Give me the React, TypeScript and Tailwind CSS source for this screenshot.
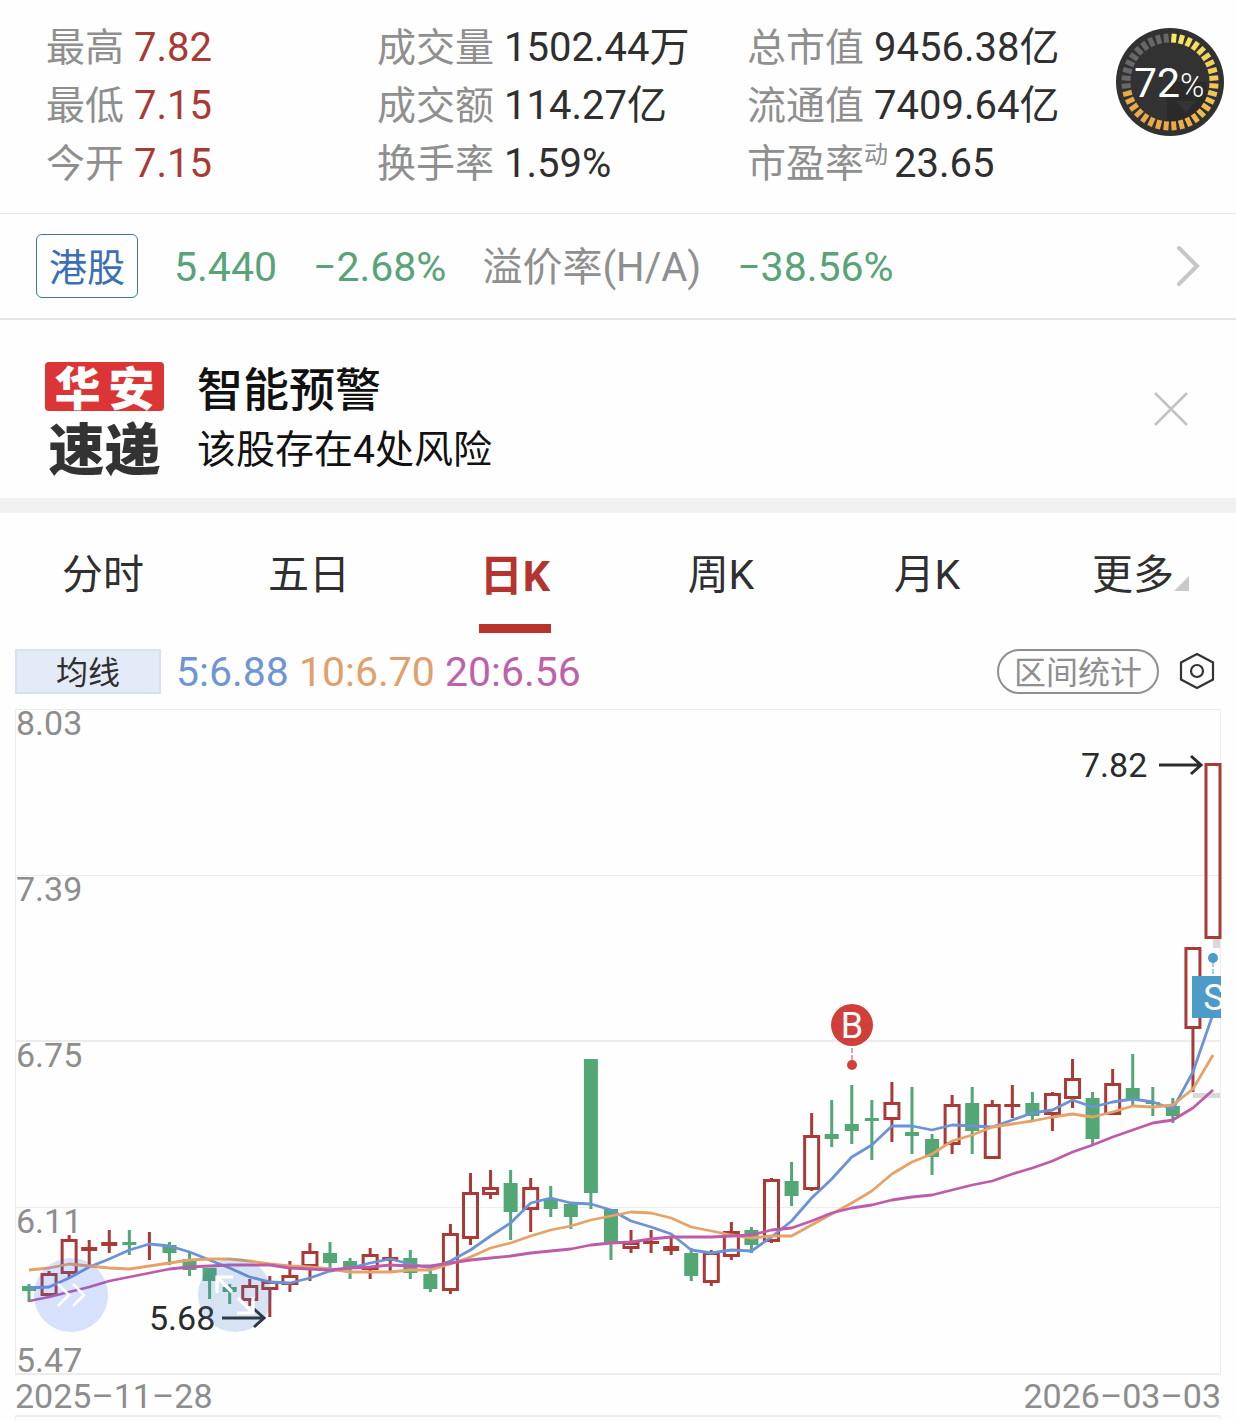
import { useState } from 'react';

const stats = [
  [
    { label: '最高', value: '7.82', red: true },
    { label: '最低', value: '7.15', red: true },
    { label: '今开', value: '7.15', red: true },
  ],
  [
    { label: '成交量', value: '1502.44万' },
    { label: '成交额', value: '114.27亿' },
    { label: '换手率', value: '1.59%' },
  ],
  [
    { label: '总市值', value: '9456.38亿' },
    { label: '流通值', value: '7409.64亿' },
    { label: '市盈率', value: '23.65', sup: '动' },
  ],
];

const tabs = ['分时', '五日', '日K', '周K', '月K', '更多'];

const RED = '#a93a36';
const GREEN = '#52a774';

// [kind, high, body top, body bottom, low], in chart units
type Candle = ['u' | 'd', number, number, number, number];

const candles: Candle[] = [
  ['d', 1284, 1286, 1291, 1302],
  ['u', 1271, 1273, 1296, 1297],
  ['u', 1235, 1239, 1274, 1278],
  ['u', 1240, 1247, 1251, 1266],
  ['u', 1230, 1242, 1246, 1253],
  ['d', 1230, 1242, 1245, 1255],
  ['u', 1232, 1245, 1245, 1260],
  ['d', 1242, 1245, 1253, 1265],
  ['d', 1253, 1259, 1270, 1276],
  ['d', 1268, 1268, 1281, 1299],
  ['d', 1284, 1287, 1292, 1304],
  ['u', 1279, 1285, 1301, 1306],
  ['u', 1276, 1281, 1290, 1317],
  ['u', 1261, 1275, 1285, 1292],
  ['u', 1243, 1251, 1267, 1281],
  ['d', 1242, 1253, 1263, 1268],
  ['d', 1258, 1261, 1269, 1279],
  ['u', 1248, 1254, 1270, 1279],
  ['u', 1248, 1257, 1261, 1273],
  ['d', 1250, 1258, 1273, 1279],
  ['d', 1271, 1274, 1289, 1292],
  ['u', 1224, 1233, 1291, 1294],
  ['u', 1173, 1192, 1239, 1245],
  ['u', 1170, 1187, 1195, 1199],
  ['d', 1170, 1183, 1212, 1240],
  ['u', 1178, 1187, 1210, 1232],
  ['d', 1186, 1199, 1209, 1217],
  ['d', 1203, 1204, 1217, 1229],
  ['d', 1059, 1059, 1193, 1209],
  ['d', 1209, 1209, 1242, 1260],
  ['u', 1230, 1242, 1249, 1253],
  ['u', 1230, 1241, 1244, 1253],
  ['u', 1237, 1246, 1251, 1255],
  ['d', 1248, 1253, 1276, 1281],
  ['u', 1250, 1252, 1283, 1286],
  ['u', 1222, 1231, 1257, 1260],
  ['d', 1227, 1230, 1245, 1253],
  ['u', 1178, 1179, 1242, 1243],
  ['d', 1162, 1181, 1196, 1206],
  ['u', 1113, 1135, 1190, 1191],
  ['d', 1100, 1134, 1139, 1147],
  ['d', 1085, 1124, 1131, 1144],
  ['d', 1100, 1118, 1121, 1160],
  ['u', 1082, 1102, 1120, 1142],
  ['d', 1087, 1132, 1136, 1154],
  ['d', 1134, 1139, 1157, 1175],
  ['u', 1095, 1104, 1145, 1154],
  ['d', 1087, 1103, 1131, 1154],
  ['u', 1100, 1104, 1159, 1159],
  ['u', 1085, 1104, 1107, 1118],
  ['d', 1092, 1103, 1116, 1120],
  ['u', 1092, 1093, 1115, 1131],
  ['u', 1059, 1078, 1099, 1108],
  ['d', 1092, 1098, 1139, 1145],
  ['u', 1069, 1083, 1115, 1115],
  ['d', 1054, 1088, 1100, 1105],
  ['d', 1087, 1102, 1104, 1116],
  ['d', 1098, 1106, 1116, 1123],
  ['u', 947, 947, 1029, 1092],
  ['u', 763, 763, 939, 939],
];

const averages = [
  {
    color: '#6b93d6',
    points: [
      1288, 1287, 1278, 1267, 1259, 1250, 1244, 1246, 1252, 1260, 1268, 1277, 1282, 1283, 1278, 1271, 1268, 1263, 1259, 1264,
      1268, 1261, 1250, 1236, 1223, 1203, 1198, 1203, 1204, 1210, 1221, 1227, 1234, 1250, 1253, 1250, 1251, 1237, 1221, 1198,
      1179, 1157, 1145, 1126, 1126, 1130, 1125, 1126, 1127, 1120, 1113, 1110, 1100, 1107, 1102, 1099, 1102, 1109, 1072, 1014,
    ],
  },
  {
    color: '#e5a269',
    points: [
      1270, 1268, 1264, 1266, 1268, 1269, 1266, 1263, 1260, 1259, 1259, 1261, 1264, 1266, 1267, 1269, 1272, 1272, 1272, 1270,
      1270, 1264, 1257, 1248, 1243, 1236, 1230, 1226, 1220, 1216, 1212, 1213, 1218, 1227, 1231, 1235, 1238, 1236, 1236, 1225,
      1214, 1203, 1191, 1174, 1162, 1154, 1141, 1135, 1127, 1124, 1121, 1117, 1114, 1117, 1112, 1106, 1107, 1105, 1089, 1055,
    ],
  },
  {
    color: '#bf5ca9',
    points: [
      1301, 1297, 1292, 1287, 1281, 1277, 1273, 1269, 1267, 1266, 1265, 1265, 1265, 1268, 1269, 1270, 1268, 1267, 1265, 1266,
      1266, 1263, 1260, 1258, 1256, 1253, 1251, 1249, 1245, 1243, 1242, 1239, 1237, 1237, 1237, 1236, 1235, 1230, 1228, 1221,
      1213, 1208, 1205, 1200, 1197, 1195, 1190, 1185, 1181, 1174, 1168, 1161, 1152, 1145, 1137, 1130, 1123, 1120, 1108, 1090,
    ],
  },
];

const priceLabels = [
  { text: '8.03', y: 735 },
  { text: '7.39', y: 901 },
  { text: '6.75', y: 1067 },
  { text: '6.11', y: 1233 },
  { text: '5.47', y: 1372 },
];

const candleX = (i: number) => 29 + (i * 1184) / 59;

function Gauge() {
  const ticks = Array.from({ length: 36 }, (_, i) => i);
  const tickColor = (i: number) => {
    if (i >= 26) return '#686868';
    const t = Math.min(i / 17, 1);
    return `rgb(${Math.round(246 - 12 * t)}, ${Math.round(232 - 62 * t)}, ${Math.round(100 - 24 * t)})`;
  };
  return (
    <svg viewBox="0 0 108 108" className="size-[108px] shrink-0" role="img" aria-label="72%">
      <circle cx="54" cy="54" r="54" fill="#323232" />
      <path d="M51 54h40v22L70 99H51z" fill="#2a2a2a" />
      <path d="M60 73h20L70 84z" fill="#343434" />
      {ticks.map(i => (
        <rect key={i} x="51.5" y="5.5" width="5" height="9" fill={tickColor(i)} transform={`rotate(${5 + i * 10} 54 54)`} />
      ))}
      <text x="18" y="69" fill="#fff" fontSize="41">72</text>
      <text x="64" y="69" fill="#fff" fontSize="33" fontWeight="300">%</text>
    </svg>
  );
}

function CandleMark({ candle, x }: { candle: Candle; x: number }) {
  const [kind, high, top, bottom, low] = candle;
  if (kind === 'd') {
    return (
      <g fill={GREEN}>
        <rect x={x - 1.5} y={high} width="3" height={low - high} />
        <rect x={x - 7} y={top} width="14" height={bottom - top} />
      </g>
    );
  }
  const h = bottom - top;
  return (
    <g fill={RED}>
      {top > high && <rect x={x - 1.5} y={high} width="3" height={top - high} />}
      {low > bottom && <rect x={x - 1.5} y={bottom} width="3" height={low - bottom} />}
      {h > 5 && <rect x={x - 7} y={top + 1.5} width="14" height={h - 3} fill="none" stroke={RED} strokeWidth="3" />}
      {h > 0 && h <= 5 && <rect x={x - 8} y={top} width="16" height={h} />}
    </g>
  );
}

function KLineChart() {
  return (
    <svg viewBox="15 709 1206 666" className="block h-auto w-full overflow-visible" role="img" aria-label="日K">
      <clipPath id="plot">
        <path d="M15 709H1221V1375H15z" />
      </clipPath>
      <g stroke="#ececec" fill="none">
        <path d="M15.5 1375V709.5H1220.5V1375" />
        <path d="M15 875.5H1221M15 1207.5H1221" />
        <path d="M15 1041H1221M15 1374H1221" strokeWidth="2" />
      </g>
      <g fill="#8d8d8d" fontSize="34">
        {priceLabels.map(p => (
          <text key={p.text} x="16" y={p.y}>{p.text}</text>
        ))}
      </g>
      <g fill="#d9d9d9">
        <rect x="1193" y="1093" width="27" height="5" />
        <rect x="1213" y="939" width="7" height="9" />
      </g>
      {candles.map((c, i) => (
        <CandleMark key={i} candle={c} x={candleX(i)} />
      ))}
      {averages.map(line => (
        <polyline
          key={line.color}
          points={line.points.map((y, i) => `${candleX(i)},${y}`).join(' ')}
          fill="none"
          stroke={line.color}
          strokeWidth="2.8"
          strokeLinejoin="round"
        />
      ))}

      {/* buy and sell marks */}
      <circle cx="852" cy="1025" r="21" fill="#d03f3a" />
      <path d="M852 1048V1060" stroke="#c04a46" strokeDasharray="5 2" />
      <circle cx="852" cy="1065" r="5" fill="#d03f3a" />
      <text x="852" y="1038" fill="#fff" fontSize="36" textAnchor="middle">B</text>
      <g clipPath="url(#plot)">
        <rect x="1192" y="976" width="42" height="42" fill="#4c9bc8" />
        <path d="M1213 962V975" stroke="#4c9bc8" strokeDasharray="5 2" />
        <circle cx="1213" cy="958" r="5" fill="#4c9bc8" />
        <text x="1214" y="1010" fill="#fff" fontSize="36" textAnchor="middle">S</text>
      </g>

      {/* highest and lowest price */}
      <g fill="#2b2b2b" fontSize="34">
        <text x="1081" y="777">7.82</text>
        <text x="149" y="1330">5.68</text>
      </g>
      <g stroke="#2b2b2b" strokeWidth="3" fill="none">
        <path d="M1159 765H1201M1191 756L1201 765L1191 774" />
        <path d="M222 1318H264M254 1309L264 1318L254 1327" />
      </g>
    </svg>
  );
}

export default function App() {
  const [tab, setTab] = useState('日K');
  const [showAlert, setShowAlert] = useState(true);

  return (
    <div className="bg-[#fefefe] font-['Roboto','Noto_Sans_CJK_SC',sans-serif] text-[#2f2f2f]">
      {/* Quote figures */}
      <section className="flex items-start border-b border-[#e4e4e4] pt-[19px] pr-3 pb-5 pl-[46px]">
        <div className="grid flex-1 grid-cols-[331fr_370fr_369fr]">
          {stats.map((column, i) => (
            <dl key={i}>
              {column.map(s => (
                <div key={s.label} className="flex h-[58px] items-center gap-[10px] whitespace-nowrap leading-[58px]">
                  <dt className="flex text-[39px] text-[#8f8f8f]">
                    {s.label}
                    {s.sup && <sup className="top-0 -mr-1 text-2xl leading-10">{s.sup}</sup>}
                  </dt>
                  <dd className={s.red ? 'text-[40px] text-[#a83a36]' : 'text-[40px]'}>{s.value}</dd>
                </div>
              ))}
            </dl>
          ))}
        </div>
        <div className="pt-[9px]">
          <Gauge />
        </div>
      </section>

      {/* H share premium */}
      <a href="#hk" className="flex h-[106px] items-center border-b-2 border-[#e4e4e4] px-9 text-[41px] whitespace-nowrap text-[#58a37a]">
        <span className="flex h-16 w-[102px] items-center justify-center rounded-md border border-[#44749f] pt-1 text-[38px] text-[#3b6fb5]">港股</span>
        <span className="ml-9 pt-1">5.440</span>
        <span className="ml-9 pt-1">−2.68%</span>
        <span className="ml-9 pt-1 text-[40px] text-[#8f8f8f]">溢价率(H/A)</span>
        <span className="ml-9 pt-1">−38.56%</span>
        <svg viewBox="0 0 24 42" className="ml-auto h-[42px] w-6" fill="none" stroke="#c6c6c8" strokeWidth="4" strokeLinecap="round">
          <path d="M3 3L21 21L3 39" />
        </svg>
      </a>

      {/* Risk alert */}
      {showAlert && (
        <section className="flex items-start pt-[42px] pr-12 pb-[22px] pl-[45px]">
          <div className="w-[119px] font-black">
            <div className="flex h-[49px] items-center justify-center gap-2 rounded-[4px] bg-[#dc3535] pt-1 text-[46px] leading-none text-white">
              <span>华</span>
              <span>安</span>
            </div>
            <div className="mt-[10px] flex h-[52px] items-center justify-center pt-2 text-[56px] leading-none text-[#333]">速递</div>
          </div>
          <div className="ml-[33px] pt-[2px] text-[#111]">
            <h2 className="text-[46px] leading-[52px] font-medium">智能预警</h2>
            <p className="mt-2 text-[39px] leading-[52px]">该股存在4处风险</p>
          </div>
          <button type="button" aria-label="关闭" onClick={() => setShowAlert(false)} className="mt-[30px] ml-auto">
            <svg viewBox="0 0 34 34" className="size-[34px]" fill="none" stroke="#c2c2c2" strokeWidth="2.5">
              <path d="M1 1L33 33M33 1L1 33" />
            </svg>
          </button>
        </section>
      )}
      <div className="h-[15px] bg-[#f1f1f1]" />

      {/* Period tabs */}
      <nav role="tablist" className="grid h-[120px] grid-cols-6">
        {tabs.map(t => (
          <button
            key={t}
            type="button"
            role="tab"
            aria-selected={tab === t}
            onClick={() => setTab(t)}
            className={
              tab === t
                ? 'relative flex items-center justify-center pt-[6px] text-[43px] font-bold text-[#b4342f]'
                : 'relative flex items-center justify-center pt-[6px] text-[41px]'
            }
          >
            <span className="relative">
              {t}
              {t === '更多' && (
                <svg viewBox="0 0 15 15" className="absolute bottom-4 left-full size-[15px]" fill="#c9c9c9">
                  <path d="M15 0V15H0z" />
                </svg>
              )}
            </span>
            {tab === t && <span className="absolute bottom-0 h-[9px] w-[72px] bg-[#b9322c]" />}
          </button>
        ))}
      </nav>

      {/* Moving averages and tools */}
      <div className="flex h-[76px] items-center px-[15px] whitespace-nowrap">
        <button type="button" className="flex h-[45px] w-[146px] items-center justify-center border-2 border-[#d6e1f1] bg-[#e3ebf8] pt-1 text-[32px]">
          均线
        </button>
        <div className="ml-[15px] flex gap-[10px] pt-1 text-[41px]">
          <span className="text-[#6f95d4]">5:6.88</span>
          <span className="text-[#dfa06c]">10:6.70</span>
          <span className="text-[#bd62a9]">20:6.56</span>
        </div>
        <button type="button" className="ml-auto flex h-[45px] w-[162px] items-center justify-center rounded-full border-2 border-[#8f8f8f] pt-1 text-[32px] text-[#8f8f8f]">
          区间统计
        </button>
        <button type="button" aria-label="设置" className="ml-5 pr-[6px]">
          <svg viewBox="0 0 36 38" className="h-[38px] w-9" fill="none" stroke="#333" strokeWidth="2.2">
            <path d="M18 2L34 10.500V27.500L18 36L2 27.500V10.500z" />
            <circle cx="18" cy="19" r="6" />
          </svg>
        </button>
      </div>

      {/* Chart */}
      <div className="px-[15px]">
        <div className="relative">
          <KLineChart />
          <button type="button" aria-label="展开" className="absolute bottom-[43px] left-[19px] flex size-[74px] items-center justify-center rounded-full bg-[#3b6cf0]/20">
            <svg viewBox="0 0 30 26" className="h-[26px] w-[30px]" fill="none" stroke="#fff" strokeWidth="2.6">
              <path d="M2 2L13 13L2 24M17 2L28 13L17 24" />
            </svg>
          </button>
          <button type="button" aria-label="全屏" className="absolute bottom-[43px] left-[183px] flex size-[74px] items-center justify-center rounded-full bg-[#3a78c2]/20">
            <svg viewBox="0 0 40 40" className="size-10" fill="none" stroke="#fff" strokeWidth="3.2">
              <path d="M18 2H2V18M2 2L17 17M22 38H38V22M38 38L23 23" />
            </svg>
          </button>
        </div>
        <div className="flex h-[42px] items-center justify-between border-b-2 border-[#eeeeee] pt-[2px] text-[34px] leading-none text-[#8d8d8d]">
          <time dateTime="2025-11-28">2025–11–28</time>
          <time dateTime="2026-03-03">2026–03–03</time>
        </div>
        <div className="h-[3px] border-x border-[#eeeeee]" />
      </div>
    </div>
  );
}
